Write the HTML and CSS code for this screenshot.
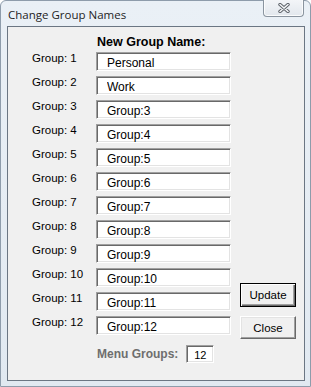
FILE: index.html
```html
<!DOCTYPE html>
<html lang="en">
<head>
  <meta charset="UTF-8">
  <title>Change Group Names</title>
  <link rel="stylesheet" href="styles.css">
</head>
<body>
  <div class="window">
    <div class="titlebar">
      <span class="title">Change Group Names</span>
      <button class="close-x" aria-label="Close">
        <svg width="14" height="10" viewBox="0 0 14 10">
          <path d="M3 1.5 L11 8.5 M11 1.5 L3 8.5" stroke="#5a5f66" stroke-width="3.4" stroke-linecap="round"/>
          <path d="M3 1.5 L11 8.5 M11 1.5 L3 8.5" stroke="#f4f6f8" stroke-width="1.6" stroke-linecap="round"/>
        </svg>
      </button>
    </div>

    <div class="client">
      <div class="groups">
        <div class="heading">New Group Name:</div>

        <label class="group-label">Group: 1</label>
        <input class="group-name" type="text" value="Personal">
        <label class="group-label">Group: 2</label>
        <input class="group-name" type="text" value="Work">
        <label class="group-label">Group: 3</label>
        <input class="group-name" type="text" value="Group:3">
        <label class="group-label">Group: 4</label>
        <input class="group-name" type="text" value="Group:4">
        <label class="group-label">Group: 5</label>
        <input class="group-name" type="text" value="Group:5">
        <label class="group-label">Group: 6</label>
        <input class="group-name" type="text" value="Group:6">
        <label class="group-label">Group: 7</label>
        <input class="group-name" type="text" value="Group:7">
        <label class="group-label">Group: 8</label>
        <input class="group-name" type="text" value="Group:8">
        <label class="group-label">Group: 9</label>
        <input class="group-name" type="text" value="Group:9">
        <label class="group-label">Group: 10</label>
        <input class="group-name" type="text" value="Group:10">
        <label class="group-label">Group: 11</label>
        <input class="group-name" type="text" value="Group:11">
        <label class="group-label">Group: 12</label>
        <input class="group-name" type="text" value="Group:12">

        <div class="actions">
          <button class="btn btn-default">Update</button>
          <button class="btn">Close</button>
        </div>
      </div>

      <div class="menu-groups">
        <span class="menu-label">Menu Groups:</span>
        <input class="count" type="text" value="12">
      </div>
    </div>
  </div>
</body>
</html>
```

FILE: styles.css
```css
body {
  margin: 0;
  padding: 0;
  background-color: #ffffff;
  font-family: 'Liberation Sans', Arial, sans-serif;
}

.window {
  box-sizing: border-box;
  width: 311px;
  height: 387px;
  display: flex;
  flex-direction: column;
  border: 1px solid #8e9cab;
  border-radius: 6px 6px 0 0;
  background: linear-gradient(to bottom, #eaf0f6, #e1e9f1);
}

.titlebar {
  height: 25px;
  display: flex;
  justify-content: space-between;
  align-items: flex-start;
  padding: 0 6px 0 7px;
}

.title {
  font-family: 'Open Sans', 'Noto Sans', sans-serif;
  font-size: 11.5px;
  line-height: 16px;
  padding-top: 6px;
  color: #1e1e1e;
}

.close-x {
  width: 41px;
  height: 17px;
  margin-top: -1px;
  padding: 0;
  display: flex;
  align-items: center;
  justify-content: center;
  border: 1px solid #8a949f;
  border-top: none;
  border-radius: 0 0 4px 4px;
  background: linear-gradient(to bottom, #f3f5f8, #e2e7ed);
  box-shadow: inset 0 -1px #fafbfc, inset 1px 0 #fafbfc, inset -1px 0 #fafbfc;
}

.client {
  flex: 1;
  margin: 0 5px 5px 6px;
  border: 1px solid #6b7683;
  background-color: #f0f0f0;
}

.groups {
  display: grid;
  grid-template-columns: 79px 135px 56px;
  grid-template-rows: 25px;
  grid-auto-rows: 24px;
  column-gap: 9px;
}

.heading {
  grid-column: 1 / -1;
  align-self: end;
  margin-bottom: 2px;
  padding-left: 89px;
  font-size: 12.5px;
  font-weight: bold;
  line-height: 15px;
  color: #000;
}

.group-label {
  grid-column: 1;
  padding-left: 24px;
  font-size: 11.5px;
  line-height: 12px;
  color: #000;
  white-space: nowrap;
}

.group-name {
  grid-column: 2;
  box-sizing: border-box;
  width: 135px;
  height: 19px;
  margin: 0;
  padding: 2px 0 0 10px;
  border: 1px solid;
  border-color: #a0a0a0 #ffffff #ffffff #a0a0a0;
  box-shadow: inset 1px 1px #696969, inset -1px -1px #e3e3e3;
  background-color: #fff;
  font-family: 'Liberation Sans', Arial, sans-serif;
  font-size: 12px;
  color: #000;
  outline: none;
}

.actions {
  grid-column: 3;
  grid-row: 11 / span 3;
  display: flex;
  flex-direction: column;
  justify-content: flex-end;
  gap: 9px;
  padding-bottom: 1px;
}

.btn {
  box-sizing: border-box;
  width: 56px;
  height: 23px;
  padding: 0;
  background-color: #f0f0f0;
  border: 1px solid;
  border-color: #ffffff #696969 #696969 #ffffff;
  box-shadow: inset -1px -1px #a0a0a0, inset 1px 1px #e3e3e3;
  font-family: 'Liberation Sans', Arial, sans-serif;
  font-size: 11.5px;
  color: #000;
}

.btn-default {
  height: 24px;
  border: 1px solid #000;
  box-shadow: inset 1px 1px #ffffff, inset -1px -1px #696969, inset -2px -2px #a0a0a0;
}

.menu-groups {
  display: flex;
  align-items: center;
  gap: 8px;
  margin-top: 5px;
  padding-left: 89px;
}

.menu-label {
  font-size: 12px;
  font-weight: bold;
  color: #6e6e6e;
}

.count {
  box-sizing: border-box;
  width: 28px;
  height: 18px;
  margin: 0;
  padding: 1px 0 0;
  text-align: center;
  border: 1px solid;
  border-color: #a0a0a0 #ffffff #ffffff #a0a0a0;
  box-shadow: inset 1px 1px #696969, inset -1px -1px #e3e3e3;
  background-color: #fff;
  font-family: 'Liberation Sans', Arial, sans-serif;
  font-size: 11px;
  color: #000;
  outline: none;
}
```
